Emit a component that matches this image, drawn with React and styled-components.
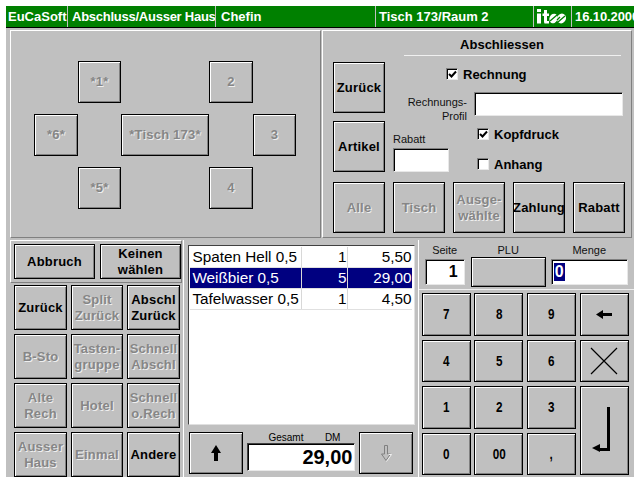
import React from "react";
import styled, { createGlobalStyle } from "styled-components";

const GlobalStyle = createGlobalStyle`
  html, body {
    margin: 0;
    padding: 0;
    background: #fff;
    overflow: hidden;
  }
  #root {
    width: 634px;
    height: 477px;
    overflow: hidden;
  }
  * {
    box-sizing: border-box;
  }
`;

function Key({ children, off, big, ...rest }) {
  return (
    <Knopf $off={off} {...rest}>
      {big ? <Ziffer>{children}</Ziffer> : children}
    </Knopf>
  );
}

function Haken({ checked, label }) {
  return (
    <HakenZeile>
      <HakenBox>
        {checked && (
          <svg width="9" height="9" viewBox="0 0 9 9">
            <path d="M1 4 L3.5 6.5 L8 1.5" fill="none" stroke="#000" strokeWidth="2" />
          </svg>
        )}
      </HakenBox>
      {label}
    </HakenZeile>
  );
}

// Firmenlogo: fette Buchstaben, "os" schraeg mit gruenen Streifen
function Logo() {
  return (
    <LogoBild width="31" height="17" viewBox="0 0 31 17">
      <rect x="1" y="1" width="4" height="3" fill="#fff" />
      <rect x="1" y="5.5" width="4" height="10" fill="#fff" />
      <path d="M8 2 H11 V5.5 H13 V8 H11 V13 H13 V15.5 H8.5 L8 14 V8 H6.5 V5.5 H8 Z" fill="#fff" />
      <ellipse cx="17.5" cy="10.5" rx="4" ry="5" fill="#fff" transform="rotate(25 17.5 10.5)" />
      <ellipse cx="25.5" cy="10.5" rx="4.4" ry="5" fill="#fff" transform="rotate(25 25.5 10.5)" />
      <path d="M14 13 L21 7 M22 14 L29 8 M21 12 L24 9" stroke="#008000" strokeWidth="1.3" />
    </LogoBild>
  );
}

const zeilen = [
  { name: "Spaten Hell 0,5", menge: "1", preis: "5,50" },
  { name: "Weißbier 0,5", menge: "5", preis: "29,00", aktiv: true },
  { name: "Tafelwasser 0,5", menge: "1", preis: "4,50" },
];

const linkeTasten = [
  ["Zurück"], ["Split", "Zurück", true], ["Abschl", "Zurück"],
  ["B-Sto", null, true], ["Tasten-", "gruppe", true], ["Schnell", "Abschl", true],
  ["Alte", "Rech", true], ["Hotel", null, true], ["Schnell", "o.Rech", true],
  ["Ausser", "Haus", true], ["Einmal", null, true], ["Andere"],
];

export default function App() {
  return (
    <Screen>
      <GlobalStyle />
      <TitelLeiste>
        <TitelFeld $w={62} $pad={2}>EuCaSoft</TitelFeld>
        <TitelFeld $w={148} $pad={4} $spur={-0.25}>Abschluss/Ausser Haus</TitelFeld>
        <TitelFeld $w={160} $pad={5}>Chefin</TitelFeld>
        <TitelFeld $w={158} $pad={3}>Tisch 173/Raum 2</TitelFeld>
        <TitelFeld $w={38} $pad={2}><Logo /></TitelFeld>
        <TitelFeld $w={62} $pad={3} $spur={-0.1}>16.10.2000</TitelFeld>
      </TitelLeiste>

      <Oben>
        <Panel>
          <TischPlan>
            <PlanZelle $col="2" $row="1"><Key off>*1*</Key></PlanZelle>
            <PlanZelle $col="4" $row="1"><Key off>2</Key></PlanZelle>
            <PlanZelle $col="1" $row="2"><Key off>*6*</Key></PlanZelle>
            <PlanZelle $col="3" $row="2"><Key off>*Tisch 173*</Key></PlanZelle>
            <PlanZelle $col="5" $row="2"><Key off>3</Key></PlanZelle>
            <PlanZelle $col="2" $row="3"><Key off>*5*</Key></PlanZelle>
            <PlanZelle $col="4" $row="3"><Key off>4</Key></PlanZelle>
          </TischPlan>
        </Panel>

        <AbschlussPanel>
          <AbschlussOben>
            <KnopfSpalte>
              <Key>Zurück</Key>
              <Key>Artikel</Key>
            </KnopfSpalte>
            <Formular>
              <Ueberschrift>Abschliessen</Ueberschrift>
              <Trenner />
              <RechnungZeile><Haken checked label="Rechnung" /></RechnungZeile>
              <ProfilZeile>
                <KleinRechts>Rechnungs-<br />Profil</KleinRechts>
                <Eingabe $w={149} $h={24} />
              </ProfilZeile>
              <OptionenZeile>
                <RabattFeld>
                  <Klein>Rabatt</Klein>
                  <Eingabe $w={56} $h={24} />
                </RabattFeld>
                <HakenSpalte>
                  <Haken checked label="Kopfdruck" />
                  <Haken label="Anhang" />
                </HakenSpalte>
              </OptionenZeile>
            </Formular>
          </AbschlussOben>
          <AbschlussUnten>
            <Key off>Alle</Key>
            <Key off>Tisch</Key>
            <Key off>Ausge-<br />wählte</Key>
            <Key>Zahlung</Key>
            <Key>Rabatt</Key>
          </AbschlussUnten>
        </AbschlussPanel>
      </Oben>

      <Unten>
        <LinkeSpalte>
          <AbbruchLeiste>
            <Key>Abbruch</Key>
            <Key>Keinen<br />wählen</Key>
          </AbbruchLeiste>
          <TastenRaster>
            {linkeTasten.map(([a, b, off], i) => (
              <Key key={i} off={off}>
                {a}
                {b && <br />}
                {b}
              </Key>
            ))}
          </TastenRaster>
        </LinkeSpalte>

        <MitteSpalte>
          <Liste>
            {zeilen.map((z) => (
              <ListenZeile key={z.name} $aktiv={z.aktiv}>
                <span>{z.name}</span>
                <span>{z.menge}</span>
                <span>{z.preis}</span>
              </ListenZeile>
            ))}
          </Liste>
          <SummenLeiste>
            <PfeilKnopf>
              <svg width="10" height="16" viewBox="0 0 10 16">
                <path d="M5 0 L10 8 L7 8 L7 16 L3 16 L3 8 L0 8 Z" fill="#000" />
              </svg>
            </PfeilKnopf>
            <SummenFeld>
              <SummenKopf><span>Gesamt</span><span>DM</span></SummenKopf>
              <SummenWert>29,00</SummenWert>
            </SummenFeld>
            <PfeilKnopf>
              <svg width="11" height="17" viewBox="0 0 11 17">
                <path d="M3.5 0.5 L6.5 0.5 L6.5 9 L9.5 9 L5 15.5 L0.5 9 L3.5 9 Z" fill="none" stroke="#808080" />
                <path d="M7.5 9.5 L10.5 9.5 L5.5 16.5" fill="none" stroke="#f0f0f0" />
              </svg>
            </PfeilKnopf>
          </SummenLeiste>
        </MitteSpalte>

        <RechteSpalte>
          <EingabeLeiste>
            <SeiteGruppe $w={41}>
              <Klein>Seite</Klein>
              <Eingabe $w={40} $h={26} $wert>1</Eingabe>
            </SeiteGruppe>
            <EingabeGruppe $w={75}>
              <Klein>PLU</Klein>
              <PluKnopf />
            </EingabeGruppe>
            <EingabeGruppe $w={77}>
              <Klein>Menge</Klein>
              <Eingabe $w={77} $h={26} $links><Markiert>0</Markiert></Eingabe>
            </EingabeGruppe>
          </EingabeLeiste>
          <Ziffern>
            {["7", "8", "9"].map((k) => <Key key={k} big>{k}</Key>)}
            <Key>
              <svg width="16" height="9" viewBox="0 0 16 9">
                <path d="M0 4.5 L7 0 L7 3 L16 3 L16 6 L7 6 L7 9 Z" fill="#000" />
              </svg>
            </Key>
            {["4", "5", "6"].map((k) => <Key key={k} big>{k}</Key>)}
            <Key>
              <svg width="28" height="28" viewBox="0 0 28 28">
                <path d="M1 1 L27 27 M27 1 L1 27" stroke="#000" strokeWidth="1.2" />
              </svg>
            </Key>
            {["1", "2", "3"].map((k) => <Key key={k} big>{k}</Key>)}
            <EnterKnopf>
              <svg width="18" height="45" viewBox="0 0 18 45">
                <path d="M16.5 0 L16.5 42.5 L7 42.5" fill="none" stroke="#000" strokeWidth="3" />
                <path d="M0 41 L8 37 L8 45 Z" fill="#000" />
              </svg>
            </EnterKnopf>
            {["0", "00", ","].map((k) => <Key key={k} big>{k}</Key>)}
          </Ziffern>
        </RechteSpalte>
      </Unten>
    </Screen>
  );
}

const Screen = styled.div`
  width: 634px;
  height: 477px;
  padding: 6px 0 0 6px;
  overflow: hidden;
  font-family: "Liberation Sans", Arial, sans-serif;
  color: #000;
  background: linear-gradient(#fff, #fff) top left / 100% 6px no-repeat,
    linear-gradient(#fff, #fff) top left / 6px 100% no-repeat, #c0c0c0;
`;

const TitelLeiste = styled.div`
  display: flex;
  height: 22px;
  background: #008000;
  border-bottom: 1px solid #000;
`;

const TitelFeld = styled.div`
  flex: 0 0 ${(p) => p.$w}px;
  padding-left: ${(p) => p.$pad}px;
  color: #fff;
  font-size: 13px;
  font-weight: bold;
  line-height: 21px;
  letter-spacing: ${(p) => p.$spur || 0}px;
  white-space: nowrap;
  overflow: hidden;
  border-right: 1px solid #c0c0c0;

  &:last-child {
    border-right: 0;
  }
`;

const LogoBild = styled.svg`
  display: block;
  margin-top: 2px;
`;

const Oben = styled.div`
  display: flex;
  gap: 1px;
  margin: 2px 0 0 4px;
  height: 208px;
`;

const Panel = styled.div`
  width: 311px;
  border: 1px solid #fff;
  border-right-color: #808080;
  border-bottom-color: #808080;
`;

const TischPlan = styled.div`
  display: grid;
  grid-template-columns: 44px 43px 88px 44px 43px;
  grid-template-rows: 42px 42px 42px;
  row-gap: 11px;
  padding: 30px 0 0 23px;
`;

const PlanZelle = styled.div`
  grid-column: ${(p) => p.$col};
  grid-row: ${(p) => p.$row};
  display: flex;
`;

const Knopf = styled.button`
  flex: 1;
  min-width: 0;
  padding: 0;
  margin: 0;
  display: flex;
  align-items: center;
  justify-content: center;
  text-align: center;
  background: #c0c0c0;
  font-family: "Liberation Sans", Arial, sans-serif;
  font-size: 13px;
  font-weight: bold;
  line-height: 16px;
  letter-spacing: 0.2px;
  white-space: nowrap;
  border: 1px solid #000;
  box-shadow: inset 1px 1px 0 #fff, inset -1px -1px 0 #808080;
  color: ${(p) => (p.$off ? "#868686" : "#000")};
  text-shadow: ${(p) => (p.$off ? "1px 1px 0 #efefef" : "none")};
`;

// Zifferntasten haben eine schmale, fette Schrift
const Ziffer = styled.span`
  display: inline-block;
  font-size: 15px;
  letter-spacing: 0;
  transform: scaleX(0.78);
`;

const AbschlussPanel = styled.div`
  width: 310px;
  padding: 0 0 0 10px;
  display: flex;
  flex-direction: column;
  border: 1px solid #fff;
  border-right-color: #808080;
  border-bottom-color: #808080;
`;

const AbschlussOben = styled.div`
  display: flex;
  height: 151px;
`;

const KnopfSpalte = styled.div`
  width: 52px;
  padding-top: 31px;
  display: flex;
  flex-direction: column;
  gap: 8px;

  button {
    flex: 0 0 51px;
  }
`;

const Formular = styled.div`
  flex: 1;
  display: flex;
  flex-direction: column;
  padding-left: 8px;
`;

const Ueberschrift = styled.div`
  width: 217px;
  height: 24px;
  margin-left: 11px;
  padding: 6px 21px 0 0;
  font-size: 13px;
  font-weight: bold;
  text-align: center;
  line-height: 16px;
`;

const Trenner = styled.div`
  height: 1px;
  width: 217px;
  margin-left: 11px;
  background: #f0f0f0;
`;

const RechnungZeile = styled.div`
  margin: 11px 0 0 53px;
`;

const HakenZeile = styled.div`
  display: flex;
  align-items: center;
  gap: 5px;
  height: 14px;
  font-size: 13px;
  font-weight: bold;
`;

const HakenBox = styled.div`
  width: 12px;
  height: 12px;
  display: flex;
  align-items: center;
  justify-content: center;
  background: #fff;
  border: 1px solid #808080;
  border-right-color: #e8e8e8;
  border-bottom-color: #e8e8e8;
  box-shadow: inset 1px 1px 0 #000;
`;

const ProfilZeile = styled.div`
  display: flex;
  align-items: flex-start;
  justify-content: flex-end;
  gap: 7px;
  margin: 11px 8px 0 0;
`;

const Klein = styled.div`
  font-size: 11px;
  line-height: 12px;
  color: #111;
`;

const KleinRechts = styled(Klein)`
  text-align: right;
  line-height: 14px;
  padding-top: 3px;
`;

const Eingabe = styled.div`
  flex: 0 0 auto;
  width: ${(p) => p.$w}px;
  height: ${(p) => p.$h}px;
  background: #fff;
  border: 1px solid #e8e8e8;
  border-top-color: #808080;
  border-left-color: #808080;
  box-shadow: inset 1px 1px 0 #000;
  display: flex;
  align-items: center;
  justify-content: ${(p) => (p.$links ? "flex-start" : "flex-end")};
  padding: ${(p) => (p.$links ? "0 0 0 2px" : "0 6px 0 0")};
  font-size: 16px;
  font-weight: bold;
`;

const OptionenZeile = styled.div`
  display: flex;
  margin-top: 4px;
`;

const RabattFeld = styled.div`
  display: flex;
  flex-direction: column;
  gap: 3px;
  width: 84px;
  padding-top: 6px;
`;

const HakenSpalte = styled.div`
  display: flex;
  flex-direction: column;
  gap: 16px;
`;

const AbschlussUnten = styled.div`
  display: grid;
  grid-template-columns: repeat(5, 52px);
  column-gap: 8px;
  height: 51px;
`;

const Unten = styled.div`
  display: flex;
  margin: 2px 0 0 4px;
`;

const LinkeSpalte = styled.div`
  width: 173px;
`;

const AbbruchLeiste = styled.div`
  height: 43px;
  display: grid;
  grid-template-columns: 81px 81px;
  column-gap: 5px;
  padding: 3px 0 3px 3px;
  border: 1px solid #fff;
  border-right-color: #808080;
  border-bottom-color: #808080;
`;

const TastenRaster = styled.div`
  display: grid;
  grid-template-columns: 53px 52px 53px;
  grid-auto-rows: 45px;
  column-gap: 4px;
  row-gap: 4px;
  margin-top: 2px;
  padding: 0 0 0 4px;
`;

const MitteSpalte = styled.div`
  width: 234px;
  padding: 5px 0 0 4px;
  border-left: 1px solid #fff;
  margin-left: 1px;
`;

const Liste = styled.div`
  width: 227px;
  height: 180px;
  background: #fff;
  padding: 1px 0 0 1px;
  border: 1px solid #e0e0e0;
  border-top-color: #404040;
  border-left-color: #404040;
`;

const ListenZeile = styled.div`
  display: grid;
  grid-template-columns: 112px 46px 64px;
  width: 222px;
  height: 21px;
  font-size: 15.3px;
  line-height: 20px;
  color: ${(p) => (p.$aktiv ? "#fff" : "#000")};
  background: ${(p) => (p.$aktiv ? "#000080" : "#fff")};
  border-bottom: 1px solid #e0e0e0;

  span {
    padding: 0 1px 0 2px;
    white-space: nowrap;
    border-right: 1px solid #d8d8d8;
  }
  span + span {
    text-align: right;
  }
  span:last-child {
    border-right: 0;
  }
`;

const SummenLeiste = styled.div`
  display: flex;
  gap: 4px;
  margin: 7px 0 0 1px;
`;

const PfeilKnopf = styled.button`
  flex: 0 0 54px;
  height: 42px;
  padding: 0;
  display: flex;
  align-items: center;
  justify-content: center;
  background: #c0c0c0;
  border: 1px solid #000;
  box-shadow: inset 1px 1px 0 #fff, inset -1px -1px 0 #808080;
`;

const SummenFeld = styled.div`
  width: 108px;
  display: flex;
  flex-direction: column;
`;

const SummenKopf = styled.div`
  display: flex;
  justify-content: space-between;
  height: 11px;
  padding: 0 15px 0 21px;
  font-size: 10px;
  line-height: 11px;
`;

const SummenWert = styled.div`
  height: 28px;
  background: #fff;
  border: 1px solid #e8e8e8;
  border-top-color: #404040;
  border-left-color: #404040;
  box-shadow: inset 1px 1px 0 #000;
  text-align: right;
  font-size: 20px;
  font-weight: bold;
  line-height: 27px;
  padding-right: 2px;
`;

const RechteSpalte = styled.div`
  width: 217px;
  margin-left: 1px;
  border-left: 1px solid #fff;
`;

const EingabeLeiste = styled.div`
  display: flex;
  height: 50px;
  gap: 5px;
  padding: 4px 0 0 6px;
  border-bottom: 1px solid #efefef;
`;

const EingabeGruppe = styled.div`
  width: ${(p) => p.$w}px;
  display: flex;
  flex-direction: column;
  align-items: center;
  gap: 3px;
`;

const SeiteGruppe = styled(EingabeGruppe)`
  padding-right: 1px;
`;

const PluKnopf = styled.button`
  width: 75px;
  height: 30px;
  margin-top: -2px;
  background: #c0c0c0;
  border: 1px solid #000;
  box-shadow: inset 1px 1px 0 #fff, inset -1px -1px 0 #808080;
`;

const Markiert = styled.span`
  background: #000080;
  color: #fff;
  padding: 0 1px;
  line-height: 18px;
`;

const Ziffern = styled.div`
  display: grid;
  grid-template-columns: repeat(4, 49px);
  grid-auto-rows: 42.6px;
  column-gap: 3.7px;
  row-gap: 4px;
  padding: 3px 0 0 3px;
`;

const EnterKnopf = styled(Knopf)`
  grid-column: 4;
  grid-row: 3 / span 2;
  padding: 0 6px 3px 0;
`;
